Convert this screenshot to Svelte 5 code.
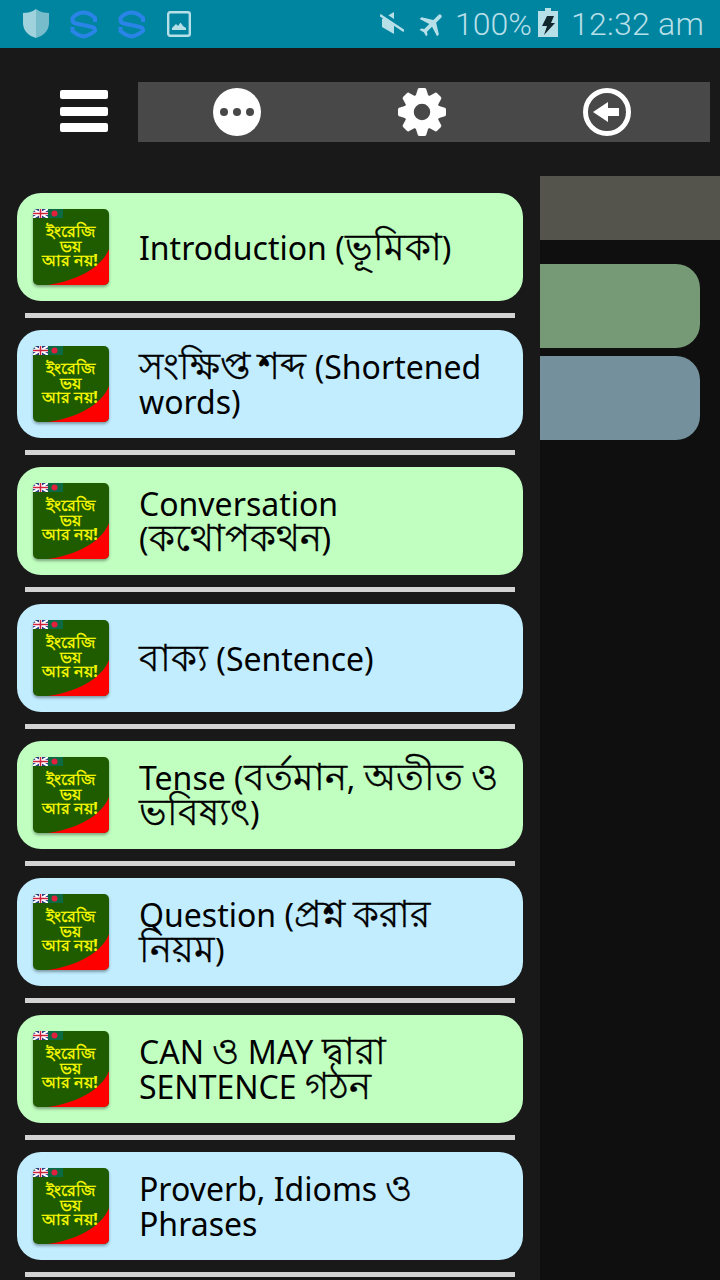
<script>
  const rows = [
    ['Introduction (ভূমিকা)', 'g'],
    ['সংক্ষিপ্ত শব্দ (Shortened words)', 'b'],
    ['Conversation (কথোপকথন)', 'g'],
    ['বাক্য (Sentence)', 'b'],
    ['Tense (বর্তমান, অতীত ও ভবিষ্যৎ)', 'g'],
    ['Question (প্রশ্ন করার নিয়ম)', 'b'],
    ['CAN ও MAY দ্বারা SENTENCE গঠন', 'g'],
    ['Proverb, Idioms ও Phrases', 'b']
  ];
  const split = (s) => s.split(/([\u0980-\u09FF]+)/).filter(Boolean).map((t) => ({ t, bn: /[\u0980-\u09FF]/.test(t) }));
  const angles = [0, 45, 90, 135, 180, 225, 270, 315];
  const sPath = 'M25 12 V8 C21 4 17 2.5 13.5 2.5 C10 2.5 6 4 2.5 8 V10 C2.5 12 4 13 6 13.5 L22 17 C24 17.5 25 18.5 25 20 V21 C21 24 17 26 13.5 26.5 C10 26 6 24 2.5 21 V17';
</script>

<div class="page">
  <header class="status">
    <div class="st-left">
      <svg class="shield" viewBox="0 0 28 30" width="28" height="30">
        <path d="M14 0 C10 3 5 4 1 4 V14 C1 22 7 27 14 29 Z" fill="#a0d2de"/>
        <path d="M14 0 C18 3 23 4 27 4 V14 C27 22 21 27 14 29 Z" fill="#76bccb"/>
      </svg>
      <svg class="s" viewBox="0 0 28 29" width="28" height="29"><path d={sPath} fill="none" stroke="#2a84e8" stroke-width="4"/></svg>
      <svg class="s" viewBox="0 0 28 29" width="28" height="29"><path d={sPath} fill="none" stroke="#2a84e8" stroke-width="4"/></svg>
      <svg class="pic" viewBox="0 0 24 26" width="24" height="26"><rect x="1.2" y="1.2" width="21.6" height="23.6" rx="2" fill="none" stroke="#b7dfe8" stroke-width="2.4"/><path d="M5 19 V17 L9 13 L11 15 L13.5 11.5 L16 15 L19 17 V19 Z" fill="#b7dfe8"/></svg>
    </div>
    <div class="st-right">
      <svg class="mute" viewBox="0 0 24 24" width="24" height="24"><path d="M2 7 L14 0 V22 L2 15 Z" fill="#b7dfe8"/><path d="M-1 0 L26 18" stroke="#0085a1" stroke-width="5"/><path d="M0 3 L24 19" stroke="#b7dfe8" stroke-width="2.4"/></svg>
      <svg class="plane" viewBox="0 0 24 24" width="31" height="31"><path transform="rotate(45 12 12)" d="M21 16v-2l-8-5V3.5c0-.83-.67-1.5-1.5-1.5S10 2.67 10 3.5V9l-8 5v2l8-2.5V19l-2 1.5V22l3.5-1 3.5 1v-1.5L13 19v-5.5l8 2.5z" fill="#b7dfe8"/></svg>
      <span class="pct">100%</span>
      <svg class="batt" viewBox="0 0 20 29" width="20" height="29"><path d="M0 3 H7 V0 H13 V3 H20 V29 H0 Z" fill="#b7dfe8"/><path d="M9 8 H16 L13 15 H17 L6 27 L9 18 H4 Z" fill="#11262d"/></svg>
      <span class="time">12:32 am</span>
    </div>
  </header>

  <div class="app">
    <div class="topbar">
      <div class="burger" aria-label="Menu"><i></i><i></i><i></i></div>
      <nav class="tools">
        <svg viewBox="0 0 48 48" width="48" height="48"><circle cx="24" cy="24" r="24" fill="#fff"/><circle cx="11" cy="24" r="4" fill="#484848"/><circle cx="24" cy="24" r="4" fill="#484848"/><circle cx="37" cy="24" r="4" fill="#484848"/></svg>
        <svg viewBox="0 0 48 48" width="48" height="48">
          <circle cx="24" cy="24" r="13" fill="none" stroke="#fff" stroke-width="9.5"/>
          {#each angles as a}
            <path transform="rotate({a} 24 24)" d="M19.5 2 Q19.5 0 21.5 0 H26.5 Q28.5 0 28.5 2 L31 10 H17 Z" fill="#fff"/>
          {/each}
        </svg>
        <svg viewBox="0 0 48 48" width="48" height="48"><circle cx="24" cy="24" r="21.5" fill="none" stroke="#fff" stroke-width="5"/><path d="M10 24 L25 14 V20 H36 V28 H25 V34 Z" fill="#fff"/></svg>
      </nav>
    </div>

    <div class="body">
      <aside class="drawer">
        {#each rows as r}
          <div class="row">
            <div class="card {r[1]}">
              <div class="logo">
                <div class="flags">
                  <svg viewBox="0 0 15 9" width="15" height="9"><rect width="15" height="9" fill="#2b3f86"/><path d="M0 0 L15 9 M15 0 L0 9" stroke="#fff" stroke-width="2"/><path d="M7.5 0 V9 M0 4.5 H15" stroke="#fff" stroke-width="3"/><path d="M7.5 0 V9 M0 4.5 H15" stroke="#d0213c" stroke-width="1.5"/></svg>
                  <svg viewBox="0 0 15 9" width="15" height="9"><rect width="15" height="9" fill="#0a6a44"/><circle cx="6.5" cy="4.5" r="3" fill="#e0203c"/></svg>
                </div>
                <svg class="swoosh" viewBox="0 0 76 76" width="76" height="76"><path d="M76 40 C68 60 42 72 15 76 H76 Z" fill="#fe0000"/></svg>
                <div class="logo-text"><span>ইংরেজি</span><span>ভয়</span><span>আর নয়!</span></div>
              </div>
              <div class="label">{#each split(r[0]) as p}{#if p.bn}<span class="bn">{p.t}</span>{:else}{p.t}{/if}{/each}</div>
            </div>
            <div class="sep"></div>
          </div>
        {/each}
      </aside>
      <main class="main">
        <div class="main-head"></div>
        <div class="stub g2"></div>
        <div class="stub b2"></div>
      </main>
    </div>
  </div>
</div>

<style>
  :global(body) { margin: 0; background: #0f0f0f; }
  .page { width: 720px; height: 1280px; overflow: hidden; display: flex; flex-direction: column; font-family: "Noto Sans", "Open Sans", sans-serif; }
  .status { height: 48px; flex: none; background: #0085a1; display: flex; justify-content: space-between; align-items: center; color: #b7dfe8; font-family: Roboto, sans-serif; }
  .st-left { display: flex; align-items: center; padding-left: 22px; }
  .st-left .s { margin-left: 20px; }
  .st-left .pic { margin-left: 21px; }
  .st-right { display: flex; align-items: center; padding-right: 16px; font-size: 32px; font-weight: 300; }
  .mute { margin-right: 13px; }
  .plane { margin-right: 7px; }
  .batt { margin: -3px 13px 0 6px; }
  .time { letter-spacing: 0.25px; }
  .app { flex: 1; display: flex; flex-direction: column; min-height: 0; }
  .topbar { height: 128px; flex: none; background: #191919; display: flex; align-items: flex-start; padding-top: 34px; box-sizing: border-box; }
  .burger { width: 48px; height: 42px; margin: 8px 30px 0 60px; display: flex; flex-direction: column; justify-content: space-between; flex: none; }
  .burger i { display: block; height: 9px; background: #fff; border-radius: 2px; }
  .tools { width: 572px; height: 60px; background: #484848; display: flex; align-items: center; justify-content: space-between; padding: 0 79px 0 75px; box-sizing: border-box; }
  .body { flex: 1; display: flex; min-height: 0; }
  .drawer { width: 540px; flex: none; background: #191919; padding-top: 17px; box-sizing: border-box; }
  .row { height: 137px; display: flex; flex-direction: column; }
  .card { margin: 0 17px; height: 108px; border-radius: 24px; display: flex; align-items: center; padding: 0 16px; box-sizing: border-box; flex: none; }
  .card.g { background: #c1ffc1; }
  .card.b { background: #c1edff; }
  .sep { height: 5px; margin: 12px 25px 0; background: #d3d3d3; flex: none; }
  .logo { position: relative; width: 76px; height: 76px; flex: none; background: #1f5c00; border-radius: 5px; box-shadow: 0 2px 3px rgba(0,0,0,.35); overflow: hidden; }
  .flags { position: absolute; left: 0; top: 0; display: flex; }
  .flags svg { display: block; }
  .swoosh { position: absolute; left: 0; top: 0; }
  .logo-text { position: absolute; inset: 15px 2px 0 0; display: flex; flex-direction: column; align-items: center; color: #f2f500; font-size: 16px; line-height: 14.5px; font-weight: 700; }
  .label { margin-left: 30px; font-size: 32px; line-height: 35px; color: #000; }
  .bn { font-size: 37px; line-height: 0; -webkit-text-stroke: 0.3px #000; }
  .main { flex: 1; min-width: 0; }
  .main-head { height: 64px; background: #54544c; }
  .stub { height: 84px; margin-right: 20px; border-radius: 0 24px 24px 0; }
  .g2 { margin-top: 24px; background: #769a75; }
  .b2 { margin-top: 8px; background: #73909c; }
</style>
